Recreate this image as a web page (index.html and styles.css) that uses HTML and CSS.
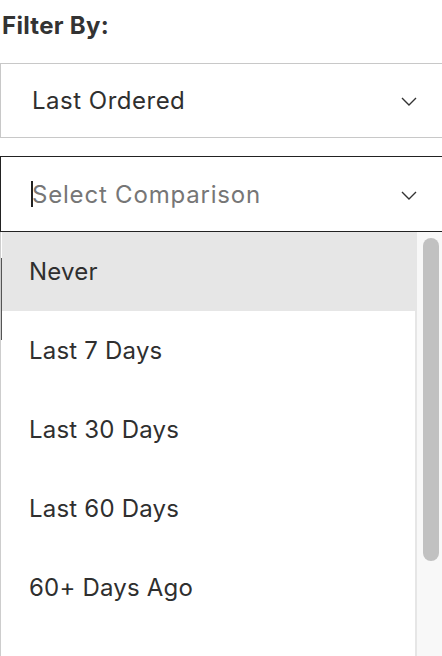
FILE: index.html
```html
<!DOCTYPE html>
<html lang="en">
<head>
<meta charset="utf-8">
<title>Filter</title>
<link rel="stylesheet" href="styles.css">
</head>
<body>
<div class="page">
  <h2 class="label">Filter By:</h2>
  <div class="select closed">
    <span class="value">Last Ordered</span>
    <svg class="chev" width="16" height="9" viewBox="0 0 16 9"><path d="M1 1 L8 8 L15 1" fill="none" stroke="#333" stroke-width="1.4"/></svg>
  </div>
  <div class="select open">
    <span class="input"><span class="caret"></span><span class="placeholder">Select Comparison</span></span>
    <svg class="chev" width="16" height="9" viewBox="0 0 16 9"><path d="M1 1 L8 8 L15 1" fill="none" stroke="#333" stroke-width="1.4"/></svg>
  </div>
  <div class="dropdown">
    <ul class="options">
      <li class="option active">Never</li>
      <li class="option">Last 7 Days</li>
      <li class="option">Last 30 Days</li>
      <li class="option">Last 60 Days</li>
      <li class="option">60+ Days Ago</li>
      <li class="option">All Time</li>
    </ul>
    <div class="scrollbar"><div class="thumb"></div></div>
  </div>
</div>
</body>
</html>
```
FILE: styles.css
```css
html, body {
  margin: 0;
  padding: 0;
  background: #fff;
  overflow: hidden;
}
body {
  font-family: Inter, "Noto Sans", sans-serif;
  color: #2f2f2f;
  width: 442px;
  height: 656px;
}
.page {
  display: flex;
  flex-direction: column;
  height: 656px;
  width: 444px;
}
.label {
  margin: 12px 0 23px 2px;
  font-size: 24px;
  line-height: 28px;
  font-weight: 700;
  color: #333;
  letter-spacing: 0.3px;
}
.select {
  box-sizing: border-box;
  display: flex;
  align-items: center;
  justify-content: space-between;
  width: 444px;
  padding: 0 26px 0 31px;
  font-size: 24px;
  letter-spacing: 0.5px;
  color: #2f2f2f;
}
.select.closed {
  height: 75px;
  border: 1px solid #c8c8c8;
  margin-bottom: 18px;
}
.select.open {
  height: 76px;
  border: 1px solid #222;
  padding-left: 30px;
}
.input {
  display: flex;
  align-items: center;
}
.caret {
  width: 2px;
  height: 26px;
  background: #222;
  margin-right: -1px;
}
.placeholder {
  color: #767676;
  letter-spacing: 0.8px;
}
.chev {
  display: block;
  margin-top: 2px;
}
.dropdown {
  position: relative;
  flex: 1;
  display: flex;
  min-height: 0;
  width: 442px;
  box-sizing: border-box;
  border-left: 1px solid #cdcdcd;
  padding-left: 1px;
}
.dropdown::before {
  content: "";
  position: absolute;
  left: 0;
  top: 26px;
  width: 1px;
  height: 82px;
  background: #555;
}
.options {
  list-style: none;
  margin: 0;
  padding: 0;
  flex: 1;
  overflow: hidden;
}
.option {
  height: 79px;
  display: flex;
  align-items: center;
  padding-left: 27px;
  font-size: 24px;
  letter-spacing: 0.2px;
  color: #2f2f2f;
}
.option.active {
  background: #e6e6e6;
}
.scrollbar {
  width: 25px;
  background: #f8f8f8;
  border-left: 2px solid #e6e6e6;
  padding-top: 6px;
}
.thumb {
  width: 16px;
  height: 323px;
  margin-left: 6px;
  border-radius: 8px;
  background: #c1c1c1;
}
```
